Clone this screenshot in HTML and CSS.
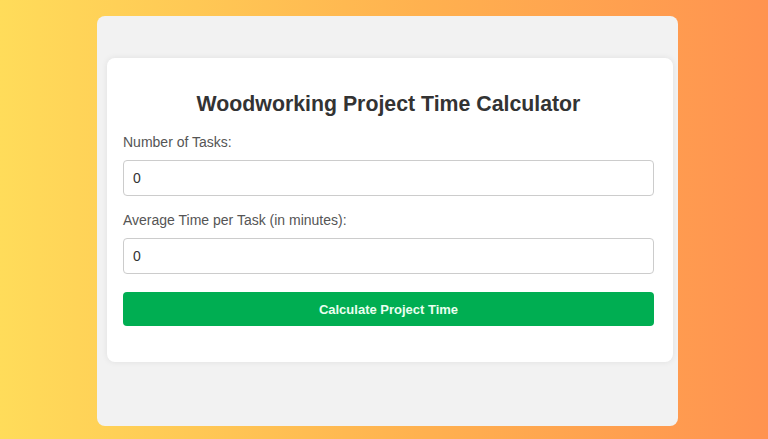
FILE: index.html
```html
<!DOCTYPE html>
<html lang="en">
<head>
    <meta charset="UTF-8">
    <meta name="viewport" content="width=device-width, initial-scale=1.0">
    <title>Woodworking Project Time Calculator</title>
    <link rel="stylesheet" href="styles.css">
</head>
<body>
    <div class="frame">
        <div class="calculator">
            <h1>Woodworking Project Time Calculator</h1>

            <label for="tasks">Number of Tasks:</label>
            <input type="number" id="tasks" value="0">

            <label for="avg-time">Average Time per Task (in minutes):</label>
            <input type="number" id="avg-time" value="0">

            <button type="button" id="calc">Calculate Project Time</button>
        </div>
    </div>
</body>
</html>
```

FILE: styles.css
```css
body {
    font-family: "Liberation Sans", Arial, sans-serif;
    margin: 0;
    padding: 0;
    height: 439px;
    background: linear-gradient(to right, #ffdc5a, #ffb14f 55%, #ff9350);
    overflow: hidden;
}
.frame {
    width: 581px;
    height: 410px;
    box-sizing: border-box;
    margin: 16px 0 0 97px;
    padding: 42px 5px 0 10px;
    background: #f2f2f2;
    border-radius: 8px;
}
.calculator {
    display: flex;
    flex-direction: column;
    padding: 20px 19px 36px 16px;
    background: #fff;
    border-radius: 8px;
    box-shadow: 0 0 6px rgba(0, 0, 0, 0.08);
}
.calculator h1 {
    margin: 14px 0 18px;
    font-size: 21.3px;
    line-height: 24px;
    text-align: center;
    color: #333;
}
.calculator label {
    font-size: 14px;
    line-height: 16px;
    color: #555;
    margin-bottom: 10px;
}
.calculator input {
    height: 36px;
    box-sizing: border-box;
    padding: 0 9px;
    margin: 0 0 16px;
    font-family: inherit;
    font-size: 14px;
    color: #333;
    border: 1px solid #ccc;
    border-radius: 4px;
    background: #fff;
}
.calculator input::-webkit-inner-spin-button {
    display: none;
}
.calculator button {
    height: 34px;
    margin-top: 2px;
    font-family: inherit;
    font-size: 13px;
    font-weight: bold;
    color: #eafff0;
    background: #00ae52;
    border: none;
    border-radius: 4px;
    cursor: pointer;
}
```
